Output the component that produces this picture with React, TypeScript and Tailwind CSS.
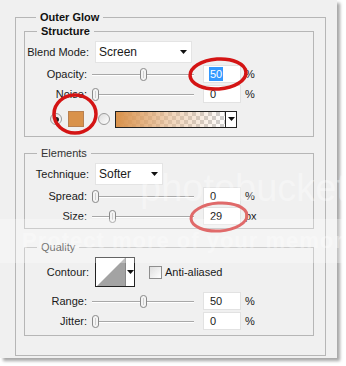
import React from "react";

const font = { fontFamily: '"Liberation Sans", Arial, sans-serif' };

function Thumb({ x }: { x: number }) {
  return (
    <svg
      className="absolute top-[3px]"
      style={{ left: x - 4 }}
      width="9"
      height="13"
      viewBox="0 0 9 13"
    >
      <path
        d="M1.5 3 Q1.5 0.5 4.5 0.5 Q7.5 0.5 7.5 3 L7.5 10 Q7.5 12.5 4.5 12.5 Q1.5 12.5 1.5 10 Z"
        fill="#f4f4f4"
        stroke="#8a8a8a"
      />
      <line x1="4.5" y1="3" x2="4.5" y2="10" stroke="#d0d0d0" />
    </svg>
  );
}

function Slider({ thumb }: { thumb: number }) {
  return (
    <div className="relative ml-[4px] h-[18px] w-[102px]">
      <div className="absolute left-0 right-0 top-[9px] h-px bg-[#a8a8a8]" />
      <div className="absolute left-0 right-0 top-[10px] h-px bg-white" />
      <Thumb x={thumb} />
    </div>
  );
}

function NumBox({ value, selected }: { value: string; selected?: boolean }) {
  return (
    <div className="ml-[9px] flex h-[18px] w-[38px] items-center border border-[#e2e2e2] bg-white pl-[5px] text-[11px]">
      {selected ? (
        <span className="bg-[#3399ff] px-[1px] leading-[14px] text-white">{value}</span>
      ) : (
        <span className="pl-[1px]">{value}</span>
      )}
    </div>
  );
}

function SliderRow({
  label,
  thumb,
  value,
  unit,
  selected,
}: {
  label: string;
  thumb: number;
  value: string;
  unit: string;
  selected?: boolean;
}) {
  return (
    <div className="flex h-[18px] items-center">
      <div className="w-[63px] pr-[1px] text-right">{label}</div>
      <Slider thumb={thumb} />
      <NumBox value={value} selected={selected} />
      <div className="ml-[4px]">{unit}</div>
    </div>
  );
}

function Arrow() {
  return (
    <svg width="7" height="4" viewBox="0 0 7 4">
      <path d="M0 0 H7 L3.5 4 Z" fill="#111" />
    </svg>
  );
}

function Dropdown({ text, width }: { text: string; width: string }) {
  return (
    <div
      className={`flex h-[22px] ${width} items-center justify-between border border-[#e4e4e4] bg-white pl-[3px] pr-[4px] text-[12px]`}
    >
      <span>{text}</span>
      <Arrow />
    </div>
  );
}

function Radio({ on }: { on?: boolean }) {
  return (
    <div className="flex h-[12px] w-[12px] items-center justify-center rounded-full border border-[#9a9a9a] bg-gradient-to-br from-[#dcdcdc] to-white">
      {on && <div className="h-[5px] w-[5px] rounded-full bg-[#222]" />}
    </div>
  );
}

function Group({
  title,
  bold,
  className,
  children,
}: {
  title: string;
  bold?: boolean;
  className?: string;
  children: React.ReactNode;
}) {
  return (
    <fieldset className={`border border-[#b6b6b6] ${className ?? ""}`}>
      <legend
        className={`ml-[12px] px-[4px] text-[11px] leading-[13px] ${
          bold ? "font-bold text-[#111]" : "text-[#333]"
        }`}
      >
        {title}
      </legend>
      {children}
    </fieldset>
  );
}

export default function App() {
  return (
    <div className="relative h-[366px] w-[346px] overflow-hidden bg-white text-[11px] text-[#1a1a1a]" style={font}>
      <div className="h-[358px] w-[337px] bg-[#f0f0f0] pl-[15px] pt-[11px] shadow-[3px_3px_3px_rgba(0,0,0,0.35)]">
        <Group title="Outer Glow" bold className="h-[345px] w-[311px] pl-[8px]">
          <Group title="Structure" bold className="mt-[1px] w-[290px] pb-[8px] pt-[3px]">
            <div className="flex flex-col gap-[2px]">
              <div className="flex h-[22px] items-center">
                <div className="w-[65px] pr-[1px] text-right">Blend Mode:</div>
                <div className="ml-[5px]">
                  <Dropdown text="Screen" width="w-[97px]" />
                </div>
              </div>
              <SliderRow label="Opacity:" thumb={51} value="50" unit="%" selected />
              <SliderRow label="Noise:" thumb={3} value="0" unit="%" />
              <div className="mt-[5px] flex h-[18px] items-center pl-[25px]">
                <Radio on />
                <div className="ml-[6px] h-[16px] w-[16px] border border-[#b88050] bg-[#d9924b]" />
                <div className="ml-[14px]">
                  <Radio />
                </div>
                <div className="ml-[5px] flex h-[17px] w-[122px] border border-[#222]">
                  <div className="relative flex-1 bg-[repeating-conic-gradient(#cfcfcf_0_25%,#ffffff_0_50%)] bg-[length:8px_8px]">
                    <div className="absolute inset-0 bg-gradient-to-r from-[#d9924b] via-[#e6b78a]/60 to-transparent" />
                  </div>
                  <div className="flex w-[11px] items-center justify-center border-l border-[#222] bg-white">
                    <Arrow />
                  </div>
                </div>
              </div>
            </div>
          </Group>

          <Group title="Elements" className="mt-[10px] w-[290px] pb-[3px] pt-[3px]">
            <div className="flex flex-col gap-[2px]">
              <div className="flex h-[22px] items-center">
                <div className="w-[65px] pr-[1px] text-right">Technique:</div>
                <div className="ml-[5px]">
                  <Dropdown text="Softer" width="w-[68px]" />
                </div>
              </div>
              <SliderRow label="Spread:" thumb={3} value="0" unit="%" />
              <SliderRow label="Size:" thumb={20} value="29" unit="px" />
            </div>
          </Group>

          <Group title="Quality" className="mt-[12px] w-[290px] pb-[5px] pt-[3px]">
            <div className="flex h-[30px] items-center">
              <div className="w-[65px] pr-[1px] text-right">Contour:</div>
              <div className="ml-[5px] flex h-[30px] w-[40px] border border-[#222] bg-white">
                <svg width="29" height="28" viewBox="0 0 29 28">
                  <path d="M1 28 L29 0 L29 28 Z" fill="#a3a3a3" />
                </svg>
                <div className="flex flex-1 items-center justify-center border-l border-[#888]">
                  <Arrow />
                </div>
              </div>
              <div className="ml-[14px] h-[13px] w-[13px] border border-[#8e8e8e] bg-gradient-to-br from-[#dedede] to-white" />
              <div className="ml-[3px]">Anti-aliased</div>
            </div>
            <div className="mt-[5px] flex flex-col gap-[2px]">
              <SliderRow label="Range:" thumb={51} value="50" unit="%" />
              <SliderRow label="Jitter:" thumb={3} value="0" unit="%" />
            </div>
          </Group>
        </Group>
      </div>

      {/* watermark */}
      <div className="pointer-events-none absolute left-0 top-[219px] h-[44px] w-[346px] bg-white/30" />
      <div className="pointer-events-none absolute left-[22px] top-[224px] whitespace-nowrap text-[22px] font-bold tracking-[1px] text-white/35">
        Protect more of your memories for less!
      </div>
      <div className="pointer-events-none absolute left-[140px] top-[160px] whitespace-nowrap text-[38px] text-white/35">
        photobucket
      </div>

      {/* red marks */}
      <svg className="pointer-events-none absolute left-0 top-0" width="346" height="366">
        <ellipse cx="218" cy="74" rx="28" ry="15" fill="none" stroke="#d41414" strokeWidth="3.5" transform="rotate(-4 218 74)" />
        <ellipse cx="75" cy="114" rx="21" ry="19" fill="none" stroke="#d41414" strokeWidth="3.5" />
        <ellipse cx="219" cy="217" rx="28" ry="14" fill="none" stroke="#e06a6a" strokeWidth="3" transform="rotate(-4 219 217)" />
      </svg>
    </div>
  );
}
